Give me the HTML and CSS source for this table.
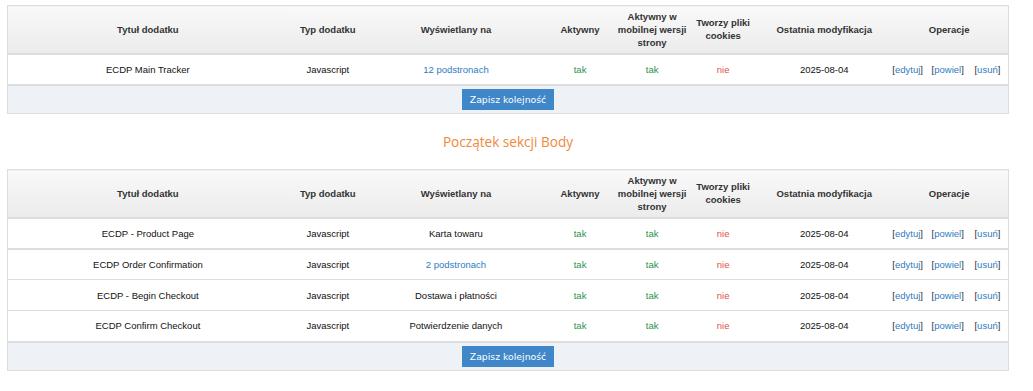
FILE: index.html
```html
<!DOCTYPE html>
<html lang="pl">
<head>
    <meta charset="UTF-8">
    <title>Dodatki</title>
    <link rel="stylesheet" href="styles.css">
</head>
<body>
<div class="page">
    <table class="addons">
        <colgroup>
            <col class="c-title"><col class="c-type"><col class="c-shown"><col class="c-active">
            <col class="c-mobile"><col class="c-cookies"><col class="c-date"><col class="c-ops">
        </colgroup>
        <thead>
        <tr>
            <th>Tytuł dodatku</th>
            <th>Typ dodatku</th>
            <th>Wyświetlany na</th>
            <th>Aktywny</th>
            <th>Aktywny w mobilnej wersji strony</th>
            <th>Tworzy pliki cookies</th>
            <th>Ostatnia modyfikacja</th>
            <th>Operacje</th>
        </tr>
        </thead>
        <tbody>
        <tr class="thick">
            <td>ECDP Main Tracker</td>
            <td>Javascript</td>
            <td><a href="#">12 podstronach</a></td>
            <td class="yes">tak</td>
            <td class="yes">tak</td>
            <td class="no">nie</td>
            <td>2025-08-04</td>
            <td class="ops">[<a href="#">edytuj</a>] <span>[<a href="#">powiel</a>]</span> <span>[<a href="#">usuń</a>]</span></td>
        </tr>
        </tbody>
        <tfoot>
        <tr>
            <td colspan="8"><button type="button">Zapisz kolejność</button></td>
        </tr>
        </tfoot>
    </table>

    <h2 class="section-title">Początek sekcji Body</h2>

    <table class="addons">
        <colgroup>
            <col class="c-title"><col class="c-type"><col class="c-shown"><col class="c-active">
            <col class="c-mobile"><col class="c-cookies"><col class="c-date"><col class="c-ops">
        </colgroup>
        <thead>
        <tr>
            <th>Tytuł dodatku</th>
            <th>Typ dodatku</th>
            <th>Wyświetlany na</th>
            <th>Aktywny</th>
            <th>Aktywny w mobilnej wersji strony</th>
            <th>Tworzy pliki cookies</th>
            <th>Ostatnia modyfikacja</th>
            <th>Operacje</th>
        </tr>
        </thead>
        <tbody>
        <tr class="thick">
            <td>ECDP - Product Page</td>
            <td>Javascript</td>
            <td>Karta towaru</td>
            <td class="yes">tak</td>
            <td class="yes">tak</td>
            <td class="no">nie</td>
            <td>2025-08-04</td>
            <td class="ops">[<a href="#">edytuj</a>] <span>[<a href="#">powiel</a>]</span> <span>[<a href="#">usuń</a>]</span></td>
        </tr>
        <tr>
            <td>ECDP Order Confirmation</td>
            <td>Javascript</td>
            <td><a href="#">2 podstronach</a></td>
            <td class="yes">tak</td>
            <td class="yes">tak</td>
            <td class="no">nie</td>
            <td>2025-08-04</td>
            <td class="ops">[<a href="#">edytuj</a>] <span>[<a href="#">powiel</a>]</span> <span>[<a href="#">usuń</a>]</span></td>
        </tr>
        <tr>
            <td>ECDP - Begin Checkout</td>
            <td>Javascript</td>
            <td>Dostawa i płatności</td>
            <td class="yes">tak</td>
            <td class="yes">tak</td>
            <td class="no">nie</td>
            <td>2025-08-04</td>
            <td class="ops">[<a href="#">edytuj</a>] <span>[<a href="#">powiel</a>]</span> <span>[<a href="#">usuń</a>]</span></td>
        </tr>
        <tr>
            <td>ECDP Confirm Checkout</td>
            <td>Javascript</td>
            <td>Potwierdzenie danych</td>
            <td class="yes">tak</td>
            <td class="yes">tak</td>
            <td class="no">nie</td>
            <td>2025-08-04</td>
            <td class="ops">[<a href="#">edytuj</a>] <span>[<a href="#">powiel</a>]</span> <span>[<a href="#">usuń</a>]</span></td>
        </tr>
        </tbody>
        <tfoot>
        <tr>
            <td colspan="8"><button type="button">Zapisz kolejność</button></td>
        </tr>
        </tfoot>
    </table>
</div>
</body>
</html>
```

FILE: styles.css
```css
* {
    margin: 0;
    padding: 0;
    box-sizing: border-box;
}

body {
    font-family: 'Liberation Sans', Arial, sans-serif;
    font-size: 9.5px;
    color: #111;
    background: #fff;
}

.page {
    width: 1002px;
    margin: 5px 0 0 7px;
}

a {
    color: #2f7bc4;
    text-decoration: none;
}

.addons {
    width: 100%;
    table-layout: fixed;
    border-collapse: collapse;
    border: 1px solid #dddddd;
}

.c-title { width: 280px; }
.c-type { width: 80px; }
.c-shown { width: 176px; }
.c-active { width: 72px; }
.c-mobile { width: 72px; }
.c-cookies { width: 70px; }
.c-date { width: 132px; }
.c-ops { width: 118px; }

.addons th {
    height: 48px;
    padding: 3px 0;
    font-weight: bold;
    color: #333;
    line-height: 13px;
    text-align: center;
    vertical-align: middle;
    background: linear-gradient(#f9f9f9, #ebebeb);
    border-bottom: 2px solid #dddddd;
}

.addons td {
    height: 31px;
    padding: 0 2px;
    text-align: center;
    vertical-align: middle;
    border-top: 1px solid #dddddd;
}

.addons tr.thick td {
    border-bottom: 2px solid #dddddd;
    border-top: none;
}

.addons td.yes {
    color: #2e9150;
}

.addons td.no {
    color: #e0524a;
}

.addons td.ops {
    color: #333;
    white-space: nowrap;
    padding-right: 8px;
}

.ops span {
    margin-left: 6px;
}

.ops span:last-child {
    margin-left: 8px;
}

.addons tfoot td {
    height: 29px;
    padding: 3px 0 2px;
    background: #eef1f5;
    border-top: 2px solid #dddddd;
}

button {
    font-family: 'DejaVu Sans', Verdana, sans-serif;
    font-size: 9.3px;
    color: #fff;
    background: #3f87c9;
    border: none;
    width: 92px;
    height: 21px;
    cursor: pointer;
}

.section-title {
    font-family: 'Open Sans', sans-serif;
    font-weight: normal;
    font-size: 13.6px;
    color: #f0883c;
    text-align: center;
    height: 55px;
    line-height: 56px;
}
```
